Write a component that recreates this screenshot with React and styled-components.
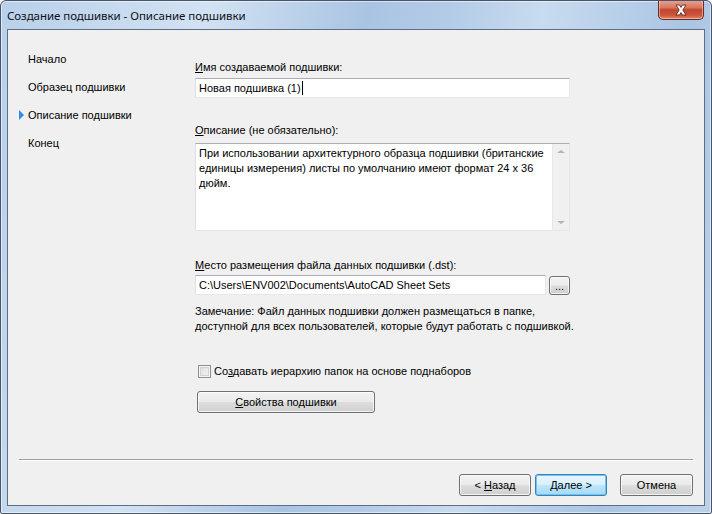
import React from "react";
import styled, { createGlobalStyle } from "styled-components";

const Global = createGlobalStyle`
  html, body { margin: 0; padding: 0; background: #ffffff; }
  body { font-family: "Liberation Sans", Arial, sans-serif; font-size: 11px; color: #000; }
  * { box-sizing: border-box; }
`;

const Window = styled.div`
  width: 712px;
  height: 514px;
  border: 1px solid #46556a;
  border-radius: 6px 6px 2px 2px;
  background: linear-gradient(100deg, #b8d0ea 0%, #cadcf0 18%, #d2e2f3 26%, #a9c4e3 46%, #b3cbe7 56%, #c8dbef 68%, #aac5e4 86%, #bcd2ea 100%);
  display: flex;
  flex-direction: column;
  overflow: hidden;
  box-shadow: inset 0 0 0 1px rgba(255,255,255,0.55);
`;

const TitleBar = styled.div`
  height: 28px;
  flex: none;
  display: flex;
  align-items: flex-start;
  justify-content: space-between;
  padding: 0 7px 0 6px;
`;

const Title = styled.div`
  font-family: "Noto Sans", "Open Sans", sans-serif;
  font-size: 11.5px;
  color: #0c1218;
  padding-top: 7px;
  letter-spacing: -0.05px;
`;

const CloseButton = styled.div`
  width: 46px;
  height: 20px;
  margin-top: -1px;
  border: 1px solid #6b2a22;
  border-top: none;
  border-radius: 0 0 5px 5px;
  background: linear-gradient(180deg, #e8a595 0%, #d9775f 40%, #c2452b 52%, #c9563b 80%, #e08a6e 100%);
  box-shadow: inset 0 0 0 1px rgba(255,220,210,0.5);
  display: flex;
  align-items: center;
  justify-content: center;
`;

const Client = styled.div`
  flex: 1;
  margin: 0 6px 7px 6px;
  border: 1px solid #5f6f83;
  background: #f0f0f0;
  display: flex;
  flex-direction: column;
`;

const Body = styled.div`
  flex: 1;
  display: flex;
`;

const Nav = styled.div`
  width: 187px;
  flex: none;
  padding: 15px 0 0 11px;
  display: flex;
  flex-direction: column;
`;

const NavItem = styled.div`
  height: 28px;
  display: flex;
  align-items: center;
  line-height: 14px;
`;

const Marker = styled.span`
  width: 9px;
  flex: none;
  display: flex;
  align-items: center;
`;

const Arrow = styled.span`
  display: block;
  width: 0;
  height: 0;
  border-top: 5px solid transparent;
  border-bottom: 5px solid transparent;
  border-left: 5px solid ${(p) => (p.$on ? "#2d8cf0" : "transparent")};
`;

const Content = styled.div`
  width: 375px;
  flex: none;
  display: flex;
  flex-direction: column;
  padding-top: 30px;
`;

const Label = styled.div`
  line-height: 14px;
  height: 14px;
  margin-top: ${(p) => p.$mt || 0}px;
  white-space: nowrap;
`;

const TextBox = styled.div`
  height: 20px;
  width: ${(p) => p.$w || "100%"};
  margin-top: ${(p) => p.$mt || 0}px;
  background: #fff;
  border: 1px solid #e2e8ee;
  border-top-color: #abadb3;
  border-left-color: #dbdfe6;
  padding: 0 3px;
  display: flex;
  align-items: center;
  white-space: nowrap;
  line-height: 14px;
`;

const Caret = styled.span`
  display: inline-block;
  width: 1px;
  height: 14px;
  background: #000;
  margin-left: 1px;
`;

const TextArea = styled.div`
  height: 88px;
  margin-top: 6px;
  background: #fff;
  border: 1px solid #e2e8ee;
  border-top-color: #abadb3;
  border-left-color: #dbdfe6;
  display: flex;
`;

const AreaText = styled.div`
  flex: 1;
  padding: 2px 3px;
  line-height: 15px;
`;

const ScrollBar = styled.div`
  width: 17px;
  flex: none;
  background: #f0f0f0;
  border-left: 1px solid #e8e8e8;
  display: flex;
  flex-direction: column;
  justify-content: space-between;
  align-items: center;
  padding: 6px 0 6px;
`;

const ScrollArrow = styled.span`
  width: 0;
  height: 0;
  border-left: 4px solid transparent;
  border-right: 4px solid transparent;
  ${(p) => (p.$down ? "border-top: 3px solid #b4b4b4;" : "border-bottom: 3px solid #b4b4b4;")}
`;

const Row = styled.div`
  display: flex;
  align-items: center;
  gap: 3px;
  margin-top: ${(p) => p.$mt || 0}px;
`;

const Button = styled.div`
  height: ${(p) => p.$h || 22}px;
  width: ${(p) => p.$w}px;
  margin-top: ${(p) => p.$mt || 0}px;
  flex: none;
  border: 1px solid ${(p) => (p.$default ? "#3c7fb1" : "#707070")};
  border-radius: 3px;
  background: ${(p) =>
    p.$default
      ? "linear-gradient(180deg, #eaf6fd 0%, #d9f0fc 48%, #bee6fd 52%, #a7d9f5 100%)"
      : "linear-gradient(180deg, #f2f2f2 0%, #ebebeb 48%, #dddddd 52%, #cfcfcf 100%)"};
  box-shadow: inset 0 0 0 1px ${(p) => (p.$default ? "rgba(100,195,250,0.95)" : "rgba(255,255,255,0.75)")};
  display: flex;
  align-items: center;
  justify-content: center;
  line-height: 14px;
  white-space: nowrap;
`;

const Dots = styled.span`
  font-size: 11px;
  margin-top: 2px;
`;

const Note = styled.div`
  margin-top: 9px;
  line-height: 15px;
  white-space: nowrap;
`;

const CheckRow = styled.label`
  display: flex;
  align-items: center;
  gap: 3px;
  margin-top: 30px;
  padding-left: 3px;
  line-height: 14px;
  white-space: nowrap;
`;

const CheckBox = styled.span`
  width: 13px;
  height: 13px;
  border: 1px solid #8e8f8f;
  background: linear-gradient(135deg, #dcdcdc 0%, #f4f4f4 100%);
  box-shadow: inset 0 0 0 1px #f4f4f4, inset 0 0 0 2px #d2d2d2;
  flex: none;
`;

const PropButton = styled(Button)`
  margin-left: 2px;
`;

const Separator = styled.div`
  height: 2px;
  margin: 0 11px;
  border-top: 1px solid #a0a0a0;
  border-bottom: 1px solid #ffffff;
  flex: none;
`;

const Footer = styled.div`
  display: flex;
  justify-content: flex-end;
  align-items: center;
  padding: 13px 11px 9px 0;
  flex: none;
`;

const Gap = styled.span`
  width: ${(p) => p.$w}px;
  flex: none;
`;

const navItems = ["Начало", "Образец подшивки", "Описание подшивки", "Конец"];

export default function App() {
  return (
    <>
      <Global />
      <Window>
        <TitleBar>
          <Title>Создание подшивки - Описание подшивки</Title>
          <CloseButton>
            <svg width="14" height="12" viewBox="0 0 14 12">
              <path d="M2 1 L5.5 1 L7 3.4 L8.5 1 L12 1 L8.8 6 L12 11 L8.5 11 L7 8.6 L5.5 11 L2 11 L5.2 6 Z" fill="#ffffff" stroke="#5a2b24" strokeWidth="0.9" strokeLinejoin="round" />
            </svg>
          </CloseButton>
        </TitleBar>
        <Client>
          <Body>
            <Nav>
              {navItems.map((t, i) => (
                <NavItem key={t}>
                  <Marker>
                    <Arrow $on={i === 2} />
                  </Marker>
                  {t}
                </NavItem>
              ))}
            </Nav>
            <Content>
              <Label>
                <u>И</u>мя создаваемой подшивки:
              </Label>
              <TextBox $mt={4}>
                Новая подшивка (1)
                <Caret />
              </TextBox>
              <Label $mt={25}>
                <u>О</u>писание (не обязательно):
              </Label>
              <TextArea>
                <AreaText>
                  При использовании архитектурного образца подшивки (британские единицы измерения) листы по умолчанию имеют формат 24 x 36 дюйм.
                </AreaText>
                <ScrollBar>
                  <ScrollArrow />
                  <ScrollArrow $down />
                </ScrollBar>
              </TextArea>
              <Label $mt={27}>
                <u>М</u>есто размещения файла данных подшивки (.dst):
              </Label>
              <Row $mt={3}>
                <TextBox $w="351px">C:\Users\ENV002\Documents\AutoCAD Sheet Sets</TextBox>
                <Button $w={21} $h={19}>
                  <Dots>...</Dots>
                </Button>
              </Row>
              <Note>
                Замечание: Файл данных подшивки должен размещаться в папке,
                <br />
                доступной для всех пользователей, которые будут работать с подшивкой.
              </Note>
              <CheckRow>
                <CheckBox />
                <span>
                  Со<u>з</u>давать иерархию папок на основе поднаборов
                </span>
              </CheckRow>
              <PropButton $w={178} $mt={13}>
                <span>
                  <u>С</u>войства подшивки
                </span>
              </PropButton>
            </Content>
          </Body>
          <Separator />
          <Footer>
            <Button $w={72}>
              <span>
                &lt; <u>Н</u>азад
              </span>
            </Button>
            <Gap $w={4} />
            <Button $w={72} $default>
              <span>
                <u>Д</u>алее &gt;
              </span>
            </Button>
            <Gap $w={13} />
            <Button $w={73}>Отмена</Button>
          </Footer>
        </Client>
      </Window>
    </>
  );
}
